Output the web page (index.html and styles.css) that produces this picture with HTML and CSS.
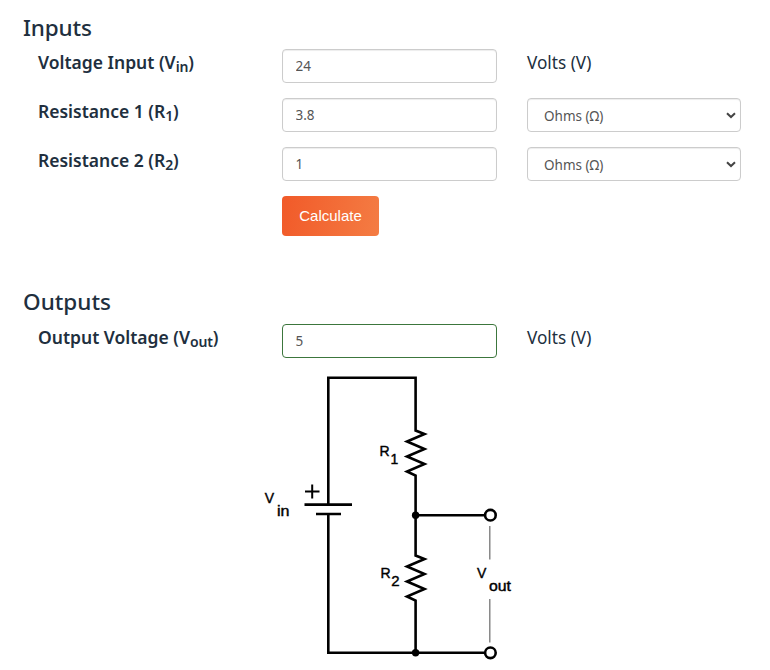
FILE: index.html
```html
<!DOCTYPE html>
<html lang="en">
<head>
<meta charset="utf-8">
<title>Voltage Divider Calculator</title>
<link rel="stylesheet" href="styles.css">
</head>
<body>
<main class="calculator">
  <h2 class="heading">Inputs</h2>
  <div class="row">
    <label class="label" for="vin">Voltage Input (V<sub>in</sub>)</label>
    <input class="field" id="vin" value="24">
    <span class="unit">Volts (V)</span>
  </div>
  <div class="row">
    <label class="label" for="r1">Resistance 1 (R<sub>1</sub>)</label>
    <input class="field" id="r1" value="3.8">
    <div class="select"><span>Ohms (Ω)</span><svg width="10" height="7" viewBox="0 0 10 7"><path d="M1 1.2L5 5L9 1.2"/></svg></div>
  </div>
  <div class="row">
    <label class="label" for="r2">Resistance 2 (R<sub>2</sub>)</label>
    <input class="field" id="r2" value="1">
    <div class="select"><span>Ohms (Ω)</span><svg width="10" height="7" viewBox="0 0 10 7"><path d="M1 1.2L5 5L9 1.2"/></svg></div>
  </div>
  <button class="calculate" type="button">Calculate</button>
  <h2 class="heading outputs">Outputs</h2>
  <div class="row">
    <label class="label" for="vout">Output Voltage (V<sub>out</sub>)</label>
    <input class="field result" id="vout" value="5">
    <span class="unit">Volts (V)</span>
  </div>
  <svg class="circuit" width="260" height="300" viewBox="260 366 260 300">
    <g class="wire">
      <path d="M328.3 504V377.8H415.6V430.5L424.5 434L407 441.5L424.5 449L407 456.5L424.5 464L407 471.5L415.6 475.5V555.5L424.5 559L407 566.5L424.5 574L407 581.5L424.5 589L407 596.5L415.6 600.5V652.8"/>
      <path d="M328.3 514V652.8H484.5M415.6 515.2H484.5"/>
      <path d="M304.5 504.6H352M316 514H341"/>
      <path class="plus" d="M305 491.5H319.5M312.2 484.5V498.5"/>
      <circle cx="490.4" cy="515.2" r="5.3"/>
      <circle cx="490.4" cy="652.8" r="5.3"/>
    </g>
    <circle cx="415.6" cy="515.2" r="3.7"/>
    <circle cx="415.6" cy="652.8" r="3.7"/>
    <path class="lead" d="M489.8 526V559.5M489.8 599V642.5"/>
    <g class="names">
      <text x="264.7" y="503">V</text><text x="277" y="516" textLength="12.5" lengthAdjust="spacingAndGlyphs">in</text>
      <text x="379.5" y="456">R</text><text x="390.5" y="464">1</text>
      <text x="380.5" y="578">R</text><text class="large" x="391.3" y="586">2</text>
      <text x="477" y="578">V</text><text x="489" y="591" textLength="22" lengthAdjust="spacingAndGlyphs">out</text>
    </g>
  </svg>
</main>
</body>
</html>
```
FILE: styles.css
```css
* { box-sizing: border-box; }
body { margin: 0; background: #fff; color: #212f3e; font-family: "Noto Sans", sans-serif; }
.calculator { width: 733px; height: 670px; margin-left: 23px; padding-top: 11px; overflow: hidden; }
.heading { margin: 0; height: 38px; font-size: 22.5px; line-height: 33px; font-weight: 500; letter-spacing: -.15px; }
.outputs { line-height: 31px; letter-spacing: 0; }
.row { display: grid; grid-template-columns: 229px 215px 214px; column-gap: 30px; height: 49px; }
.label { padding-left: 15px; font-size: 17.5px; font-weight: 600; line-height: 27px; white-space: nowrap; }
.unit { font-size: 17.2px; line-height: 28px; }
sub { font-size: 80%; line-height: 0; position: relative; bottom: -0.2em; vertical-align: baseline; letter-spacing: -.2px; }
.field, .select { height: 34px; border: 1px solid #ccc; border-radius: 4px; background: #fff; color: #555; font: 13.5px "Noto Sans", sans-serif; box-shadow: inset 0 1px 1px rgba(0,0,0,.075); }
.field { width: 100%; padding: 0 12.5px 1px; outline: 0; }
.result { border-color: #3c763d; box-shadow: none; }
.select { display: flex; align-items: center; justify-content: space-between; padding: 1px 4px 0 16px; }
.select svg { fill: none; stroke: #444; stroke-width: 2; margin-top: -1px; }
.calculate { display: block; width: 97px; height: 40px; margin: 0 0 50px 259px; padding: 0 0 1px; border: 0; border-radius: 4px; color: #fff; background: linear-gradient(100deg, #f15a29, #f47c43); font: 15px "Liberation Sans", sans-serif; }
.circuit { display: block; margin: -7px 0 0 237px; }
.wire { fill: none; stroke: #000; stroke-width: 2.6; }
.wire .plus { stroke-width: 2; }
.lead { fill: none; stroke: #777; stroke-width: 1.3; }
.names { font: 14px "Liberation Sans", sans-serif; stroke: #000; stroke-width: .4; }
.names .large { font-size: 15px; }
```
